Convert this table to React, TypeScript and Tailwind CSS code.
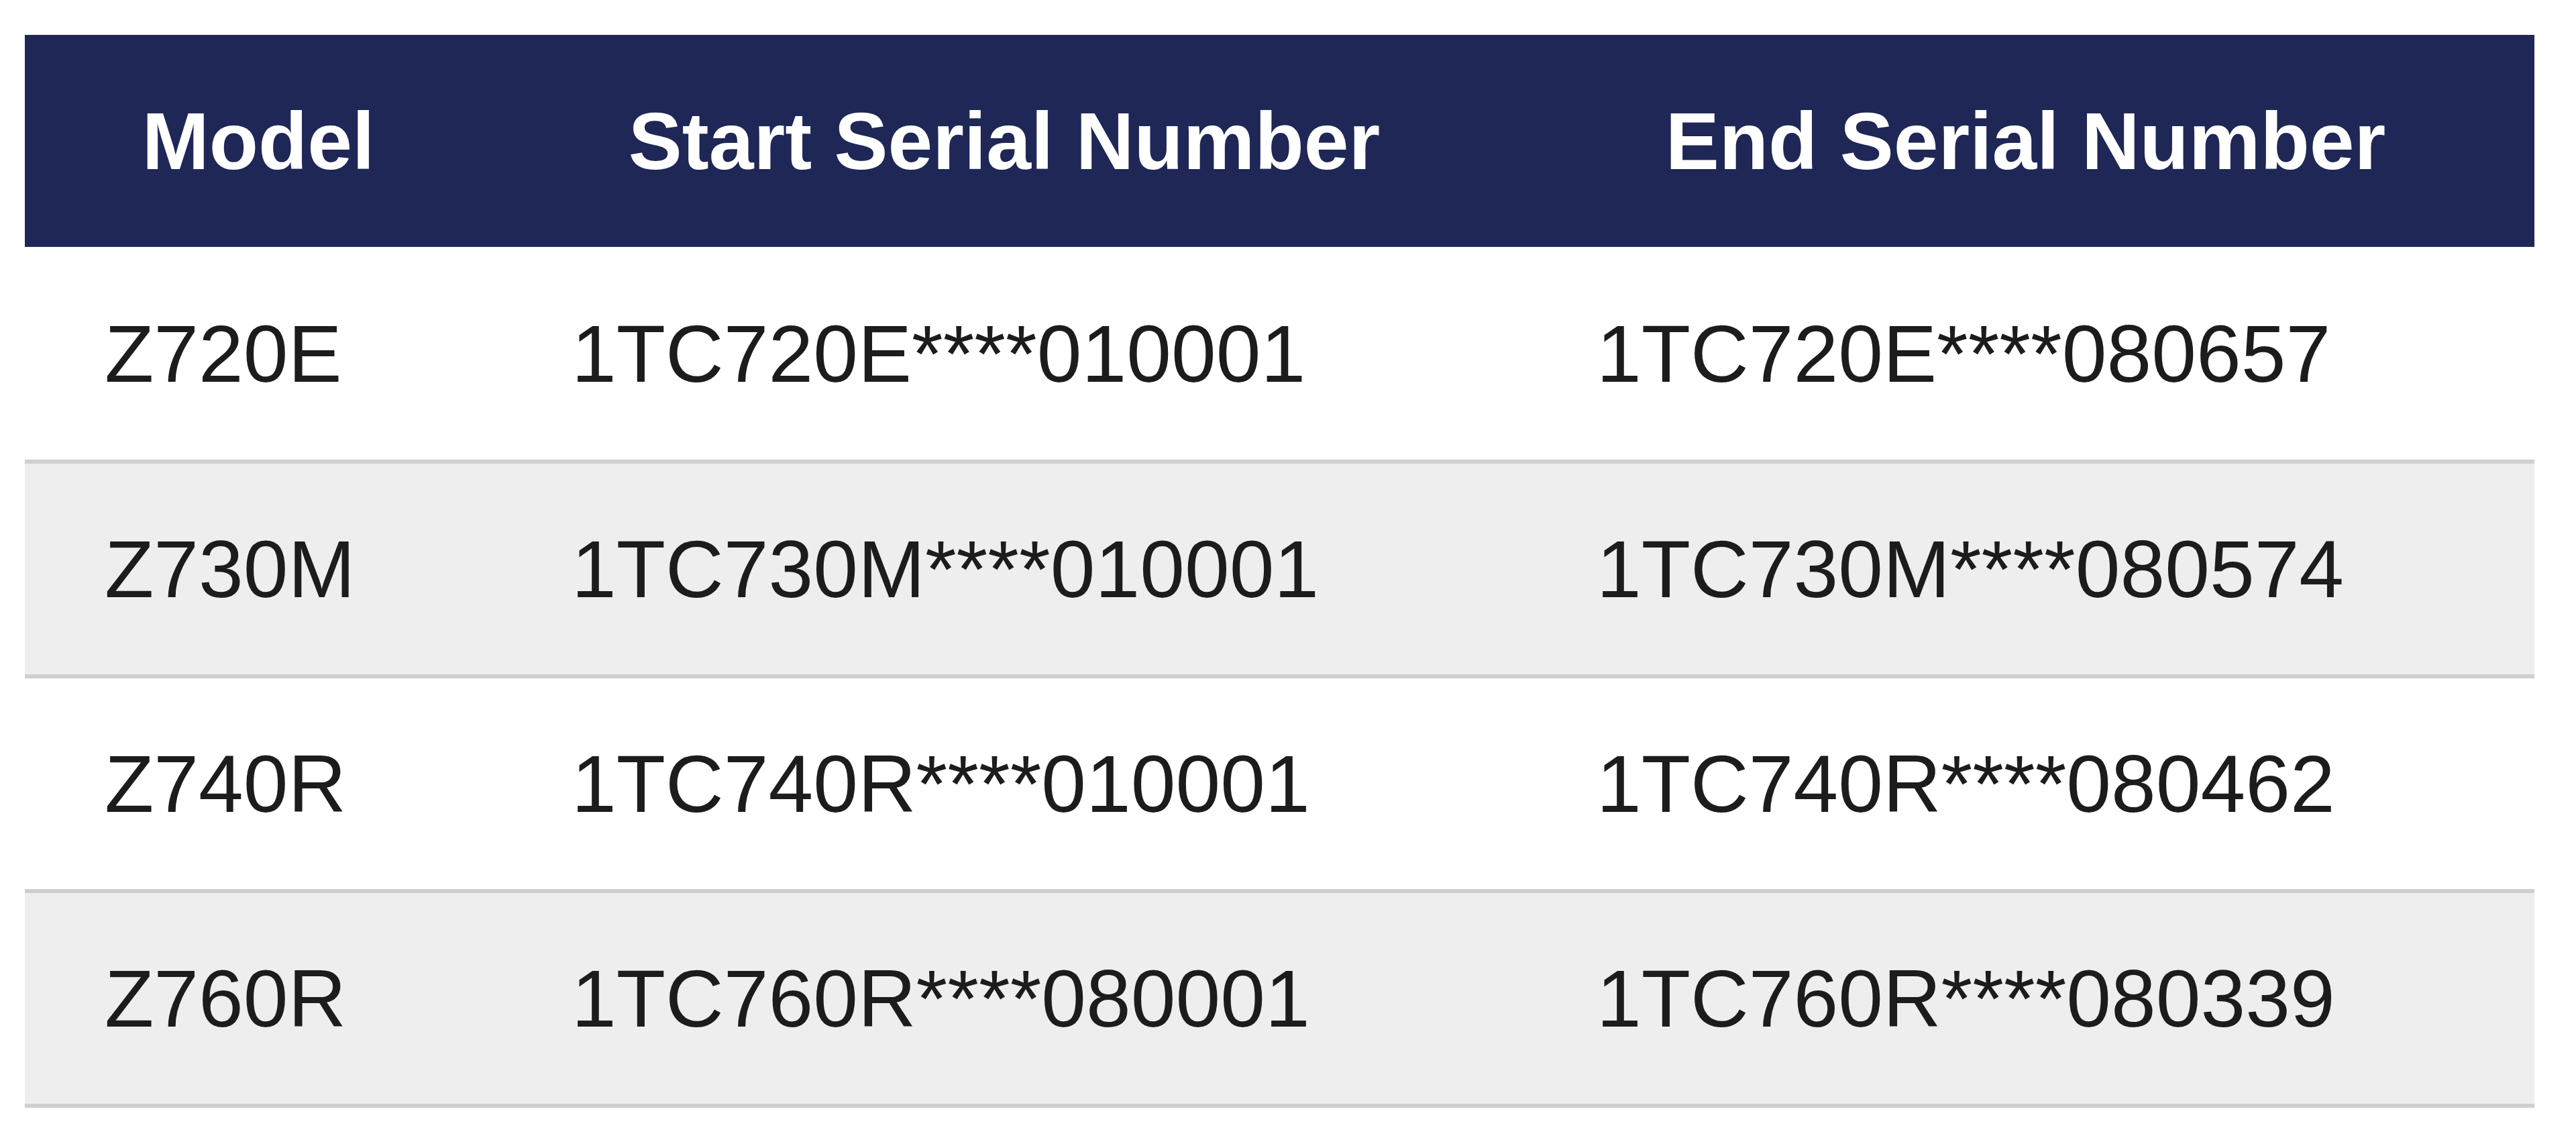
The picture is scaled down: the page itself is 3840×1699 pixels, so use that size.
const rows = [
  { model: "Z720E", start: "1TC720E****010001", end: "1TC720E****080657" },
  { model: "Z730M", start: "1TC730M****010001", end: "1TC730M****080574" },
  { model: "Z740R", start: "1TC740R****010001", end: "1TC740R****080462" },
  { model: "Z760R", start: "1TC760R****080001", end: "1TC760R****080339" },
];

export default function App() {
  return (
    <div className="min-h-screen bg-white pl-[37px] pt-[52px]" style={{ fontFamily: '"Liberation Sans", Arial, Helvetica, sans-serif' }}>
      <table className="w-[3741px] table-fixed border-collapse text-[120px] leading-none">
        <colgroup>
          <col className="w-[696px]" />
          <col className="w-[1528px]" />
          <col />
        </colgroup>
        <thead>
          <tr className="h-[316px] bg-[#1e2756] text-white">
            <th className="text-center font-bold">Model</th>
            <th className="text-center font-bold">Start Serial Number</th>
            <th className="text-center font-bold">End Serial Number</th>
          </tr>
        </thead>
        <tbody className="text-[#1c1c1c]">
          {rows.map((r, i) => (
            <tr key={r.model} className={`h-[320px] border-b-[6px] border-[#cfcfcf] ${i % 2 === 1 ? "bg-[#eeeeee]" : "bg-white"}`}>
              <td className="pl-[119px] text-left">{r.model}</td>
              <td className="pl-[119px] text-left">{r.start}</td>
              <td className="pl-[119px] text-left">{r.end}</td>
            </tr>
          ))}
        </tbody>
      </table>
    </div>
  );
}
